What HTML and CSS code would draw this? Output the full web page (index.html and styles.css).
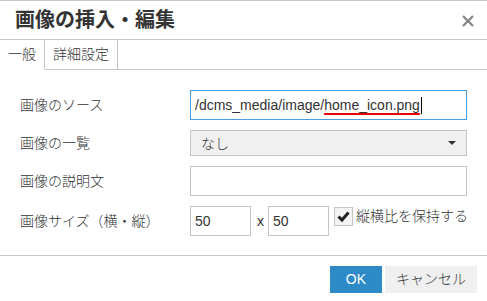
FILE: index.html
```html
<!DOCTYPE html>
<html lang="ja">
<head>
<meta charset="utf-8">
<title>画像の挿入・編集</title>
<link rel="stylesheet" href="styles.css">
</head>
<body>
<div class="dialog">
  <div class="header">
    <div class="title">画像の挿入・編集</div>
    <button class="close" aria-label="閉じる">
      <svg width="12" height="12" viewBox="0 0 12 12"><path d="M1 1 L11 11 M11 1 L1 11" stroke="#858585" stroke-width="2.2" fill="none"/></svg>
    </button>
  </div>
  <div class="tabs">
    <div class="tab active">一般</div>
    <div class="tab">詳細設定</div>
    <div class="tab-fill"></div>
  </div>
  <div class="body">
    <div class="row">
      <div class="label">画像のソース</div>
      <div class="input focus"><span>/dcms_media/image/</span><span class="err">home_icon.png</span><span class="caret-line"></span></div>
    </div>
    <div class="row">
      <div class="label">画像の一覧</div>
      <div class="select"><span>なし</span><span class="arrow"></span></div>
    </div>
    <div class="row">
      <div class="label">画像の説明文</div>
      <div class="input"></div>
    </div>
    <div class="row">
      <div class="label">画像サイズ（横・縦）</div>
      <div class="input small">50</div>
      <div class="times">x</div>
      <div class="input small">50</div>
      <div class="check">
        <span class="box"><svg width="17" height="17" viewBox="0 0 17 17"><path d="M3.5 8.5 L7 12 L13.5 4.5" stroke="#222" stroke-width="3" fill="none"/></svg></span>
        <span class="check-label">縦横比を保持する</span>
      </div>
    </div>
  </div>
  <div class="footer">
    <button class="btn primary">OK</button>
    <button class="btn">キャンセル</button>
  </div>
</div>
</body>
</html>
```
FILE: styles.css
```css
html, body {
  margin: 0;
  padding: 0;
  background: #fff;
}
body {
  font-family: "Liberation Sans", "Noto Sans CJK JP", sans-serif;
  font-size: 14px;
  font-weight: 300;
  color: #333;
}
.dialog {
  width: 487px;
  border-top: 1px solid #c5c5c5;
}
.header {
  height: 38px;
  display: flex;
  align-items: center;
  justify-content: space-between;
  padding: 0 13px 0 15px;
  border-bottom: 1px solid #c5c5c5;
}
.title {
  font-size: 20px;
  font-weight: bold;
  line-height: 20px;
  color: #333;
}
.close {
  border: 0;
  background: none;
  padding: 0;
  margin: 2px 0 0 0;
  width: 12px;
  height: 12px;
  display: flex;
}
.tabs {
  display: flex;
  height: 30px;
}
.tab {
  padding: 0 8px;
  line-height: 29px;
  border-right: 1px solid #c5c5c5;
  border-bottom: 1px solid #c5c5c5;
  color: #333;
}
.tab.active {
  border-bottom-color: #fff;
}
.tab-fill {
  flex: 1;
  border-bottom: 1px solid #c5c5c5;
}
.body {
  padding: 20px 20px 19px 20px;
  display: flex;
  flex-direction: column;
  gap: 10px;
}
.row {
  display: flex;
  align-items: center;
}
.label {
  width: 170px;
  flex: none;
  line-height: 20px;
}
.input {
  flex: 1;
  height: 30px;
  box-sizing: border-box;
  border: 1px solid #c5c5c5;
  padding: 0 4px;
  display: flex;
  align-items: center;
  background: #fff;
  white-space: nowrap;
}
.input.focus {
  border-color: #4a9de0;
}
.input.small {
  flex: none;
  width: 61px;
}
.err {
  text-decoration: underline;
  text-decoration-color: #e60000;
  text-decoration-thickness: 2px;
  text-underline-offset: 3px;
  text-decoration-skip-ink: none;
}
.caret-line {
  width: 1px;
  height: 17px;
  background: #000;
  margin-left: 1px;
}
.select {
  flex: 1;
  height: 26px;
  box-sizing: border-box;
  border: 1px solid #c5c5c5;
  background: #f0f0f0;
  padding: 0 10px 0 10px;
  display: flex;
  align-items: center;
  justify-content: space-between;
}
.arrow {
  width: 0;
  height: 0;
  border-left: 4px solid transparent;
  border-right: 4px solid transparent;
  border-top: 4px solid #333;
}
.times {
  margin: 0 4px 0 6px;
  line-height: 20px;
}
.check {
  align-self: flex-start;
  margin-top: 1px;
  margin-left: 5px;
  display: flex;
  align-items: center;
  height: 19px;
}
.box {
  width: 19px;
  height: 19px;
  box-sizing: border-box;
  border: 1px solid #c5c5c5;
  background: #f4f4f4;
  display: flex;
  align-items: center;
  justify-content: center;
}
.check-label {
  margin-left: 3px;
  line-height: 19px;
  white-space: nowrap;
}
.footer {
  border-top: 1px solid #c5c5c5;
  padding: 10px 10px 0 0;
  display: flex;
  justify-content: flex-end;
  gap: 3px;
}
.btn {
  height: 27px;
  border: 0;
  margin: 0;
  font-family: "Liberation Sans", "Noto Sans CJK JP", sans-serif;
  font-size: 14px;
  font-weight: 300;
  line-height: 27px;
  padding: 0 11px;
  background: #f0f0f0;
  color: #333;
}
.btn.primary {
  background: #2d8ac7;
  color: #fff;
  padding: 0 16px;
}
```
